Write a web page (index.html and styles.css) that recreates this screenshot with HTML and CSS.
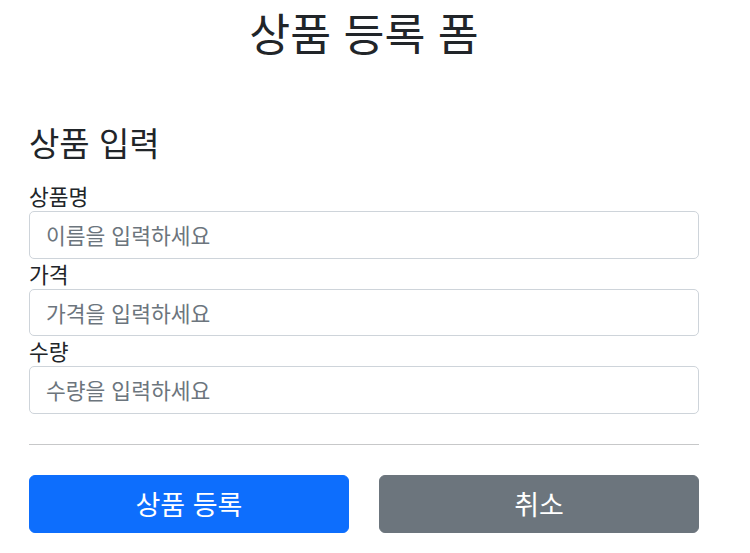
FILE: index.html
```html
<!DOCTYPE html>
<html lang="ko">
<head>
<meta charset="utf-8">
<title>상품 등록 폼</title>
<link rel="stylesheet" href="styles.css">
</head>
<body>
<div class="container">
  <div class="page-head">
    <h2 class="page-title">상품 등록 폼</h2>
  </div>
  <form class="item-form">
    <h4 class="section-title">상품 입력</h4>
    <div class="field">
      <label for="itemName">상품명</label>
      <input type="text" id="itemName" class="form-control" placeholder="이름을 입력하세요">
    </div>
    <div class="field">
      <label for="price">가격</label>
      <input type="text" id="price" class="form-control" placeholder="가격을 입력하세요">
    </div>
    <div class="field">
      <label for="quantity">수량</label>
      <input type="text" id="quantity" class="form-control" placeholder="수량을 입력하세요">
    </div>
    <hr class="divider">
    <div class="actions">
      <button type="submit" class="btn btn-primary">상품 등록</button>
      <button type="button" class="btn btn-secondary">취소</button>
    </div>
  </form>
</div>
</body>
</html>
```
FILE: styles.css
```css
* { box-sizing: border-box; }
html, body { margin: 0; padding: 0; background: #fff; }
body {
  width: 728px;
  font-family: "Noto Sans CJK KR", "Noto Sans", "Liberation Sans", sans-serif;
  font-size: 21.5px;
  line-height: 30px;
  color: #212529;
}
.container {
  max-width: 700px;
  margin: 0 auto;
  padding: 0 15px;
}
.page-head {
  text-align: center;
  padding-top: 8px;
  padding-bottom: 68px;
}
.page-title {
  margin: 0;
  font-size: 44.5px;
  font-weight: 400;
  line-height: 48px;
}
.section-title {
  margin: 0 0 20px;
  font-size: 33px;
  font-weight: 400;
  line-height: 37px;
}
.field label { display: block; line-height: 30px; }
.form-control {
  display: block;
  width: 100%;
  height: 47.5px;
  padding: 7px 16px;
  font: inherit;
  font-size: 21.5px;
  line-height: 30px;
  color: #212529;
  background: #fff;
  border: 1px solid #ced4da;
  border-radius: 5px;
  outline: none;
}
.form-control::placeholder { color: #6c757d; opacity: 1; }
.divider {
  margin: 30px 0;
  border: 0;
  border-top: 1px solid #212529;
  opacity: .25;
}
.actions {
  display: grid;
  grid-template-columns: 1fr 1fr;
  column-gap: 30px;
}
.btn {
  height: 58px;
  font: inherit;
  font-size: 27px;
  line-height: 36px;
  color: #fff;
  border: 1px solid transparent;
  border-radius: 6px;
  cursor: pointer;
}
.btn-primary { background: #0d6efd; border-color: #0d6efd; }
.btn-secondary { background: #6c757d; border-color: #6c757d; }
```
